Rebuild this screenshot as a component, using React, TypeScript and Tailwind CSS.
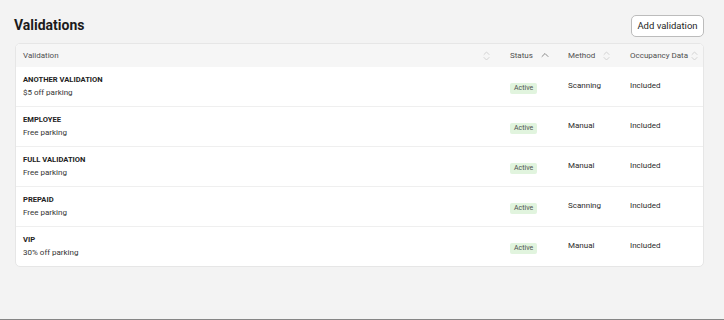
import React from "react";

const rows = [
  { name: "ANOTHER VALIDATION", desc: "$5 off parking", method: "Scanning" },
  { name: "EMPLOYEE", desc: "Free parking", method: "Manual" },
  { name: "FULL VALIDATION", desc: "Free parking", method: "Manual" },
  { name: "PREPAID", desc: "Free parking", method: "Scanning" },
  { name: "VIP", desc: "30% off parking", method: "Manual" },
];

function SortBoth() {
  return (
    <svg width="7" height="10" viewBox="0 0 7 10" fill="none" stroke="#d2d2d2" strokeWidth="1" strokeLinecap="round" strokeLinejoin="round">
      <path d="M1 3.5 L3.5 1 L6 3.5" />
      <path d="M1 6.5 L3.5 9 L6 6.5" />
    </svg>
  );
}

function SortUp() {
  return (
    <svg width="8" height="10" viewBox="0 0 8 10" fill="none" stroke="#8a8a8a" strokeWidth="1" strokeLinecap="round" strokeLinejoin="round">
      <path d="M1 5.5 L4 2.5 L7 5.5" />
    </svg>
  );
}

export default function App() {
  return (
    <div className="w-[724px] h-[320px] bg-[#f3f3f3] border-b border-[#858585] flex flex-col font-['Roboto',sans-serif]">
      <div className="flex items-center justify-between pl-[14px] pr-[20px] pt-[15px]">
        <h1 className="text-[14px] leading-[22px] font-bold text-[#1b1b1b] -mt-[2px]">Validations</h1>
        <button className="h-[22px] w-[73px] rounded-[5px] border border-[#bcbcbc] bg-white text-[9.5px] text-[#1f1f1f]">
          Add validation
        </button>
      </div>
      <div className="mt-[6px] ml-[15px] mr-[20px] rounded-[5px] border border-[#e6e6e6] bg-white overflow-hidden">
        <div className="grid grid-cols-[487px_58px_62px_1fr] h-[23px] bg-[#f6f6f6] text-[8px] text-[#505050] items-center">
          <div className="flex items-center justify-between pl-[7px] pr-[13px]">
            <span>Validation</span>
            <SortBoth />
          </div>
          <div className="flex items-center justify-between pl-[7px] pr-[12px]">
            <span>Status</span>
            <SortUp />
          </div>
          <div className="flex items-center justify-between pl-[7px] pr-[13px]">
            <span>Method</span>
            <SortBoth />
          </div>
          <div className="flex items-center justify-between pl-[7px] pr-[5px]">
            <span>Occupancy Data</span>
            <SortBoth />
          </div>
        </div>
        {rows.map((r, i) => (
          <div
            key={r.name}
            className={`grid grid-cols-[487px_58px_62px_1fr] items-center text-[8px] text-[#2a2a2a] ${i > 0 ? "h-[40px] border-t border-[#efefef]" : "h-[39px]"}`}
          >
            <div className="flex flex-col gap-[3px] pl-[7px] -mt-[1px]">
              <span className="leading-[10px] text-[7.6px] font-bold text-[#222]">{r.name}</span>
              <span className="leading-[10px] text-[#333]">{r.desc}</span>
            </div>
            <div className="pl-[7px] pt-[3px]">
              <span className="inline-flex items-center h-[11px] px-[4px] rounded-[2px] bg-[#e1f4de] text-[7px] text-[#505050]">
                Active
              </span>
            </div>
            <div className="pl-[7px] leading-[10px] -mt-[1px]">{r.method}</div>
            <div className="pl-[7px] leading-[10px] -mt-[1px]">Included</div>
          </div>
        ))}
      </div>
    </div>
  );
}
